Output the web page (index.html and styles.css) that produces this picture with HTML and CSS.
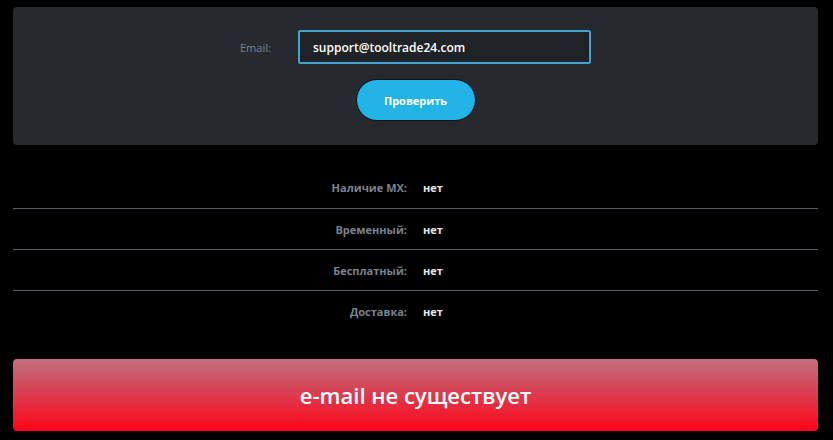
FILE: index.html
```html
<!DOCTYPE html>
<html lang="ru">

<head>
    <meta charset="UTF-8">
    <meta name="viewport" content="width=device-width, initial-scale=1.0">
    <title>Проверка e-mail</title>
    <link rel="stylesheet" href="styles.css">
</head>

<body>
    <div class="page">
        <!-- Форма проверки -->
        <div class="check-card">
            <div class="field-row">
                <label class="field-label" for="email">Email:</label>
                <input id="email" type="text" class="field-input" value="support@tooltrade24.com">
            </div>
            <button class="check-btn">Проверить</button>
        </div>

        <!-- Результаты -->
        <div class="results">
            <div class="result-row">
                <span class="result-label">Наличие MX:</span>
                <span class="result-value">нет</span>
            </div>
            <div class="result-row">
                <span class="result-label">Временный:</span>
                <span class="result-value">нет</span>
            </div>
            <div class="result-row">
                <span class="result-label">Бесплатный:</span>
                <span class="result-value">нет</span>
            </div>
            <div class="result-row">
                <span class="result-label">Доставка:</span>
                <span class="result-value">нет</span>
            </div>
        </div>

        <div class="status-bar">e-mail не существует</div>
    </div>
</body>

</html>
```

FILE: styles.css
```css
/* Общие стили */
body {
    margin: 0;
    padding: 0;
    background-color: #000;
    font-family: 'Open Sans', 'Noto Sans', sans-serif;
    color: #fff;
}

.page {
    padding: 7px 15px 0 13px;
}

/* Карточка с формой */
.check-card {
    background-color: #26292e;
    border-radius: 4px;
    height: 138px;
    box-sizing: border-box;
    padding-top: 23px;
    display: flex;
    flex-direction: column;
    align-items: center;
}

.field-row {
    display: flex;
    align-items: center;
}

.field-label {
    color: #7d848e;
    font-size: 11px;
    width: 58px;
    text-align: left;
}

.field-input {
    width: 293px;
    height: 34px;
    box-sizing: border-box;
    background-color: #1f2227;
    border: 2px solid #3fa4d2;
    border-radius: 2px;
    color: #fff;
    font-family: 'Open Sans', sans-serif;
    font-weight: 600;
    font-size: 12px;
    padding: 0 13px;
    outline: none;
}

.check-btn {
    margin-top: 15px;
    width: 120px;
    height: 42px;
    background-color: #22b4e6;
    color: #fff;
    border: 1px solid #0d0f12;
    border-radius: 21px;
    font-family: 'Open Sans', sans-serif;
    font-weight: 700;
    font-size: 11px;
    cursor: pointer;
}

/* Таблица результатов */
.results {
    margin-top: 22px;
}

.result-row {
    display: flex;
    align-items: center;
    height: 40px;
    border-bottom: 1px solid #575c66;
    font-size: 11px;
    font-weight: 700;
}

.result-row:first-child {
    height: 41px;
}

.result-row:last-child {
    border-bottom: none;
}

.result-label {
    width: 394px;
    text-align: right;
    color: #7b828d;
}

.result-value {
    margin-left: 16px;
    color: #e6e6e6;
}

/* Итоговый статус */
.status-bar {
    margin-top: 28px;
    height: 72px;
    border-radius: 4px;
    background: linear-gradient(to bottom, #c0707d 0%, #d64658 40%, #ff0418 100%);
    display: flex;
    align-items: center;
    justify-content: center;
    font-size: 22px;
    font-weight: 600;
    color: #fff;
}
```
